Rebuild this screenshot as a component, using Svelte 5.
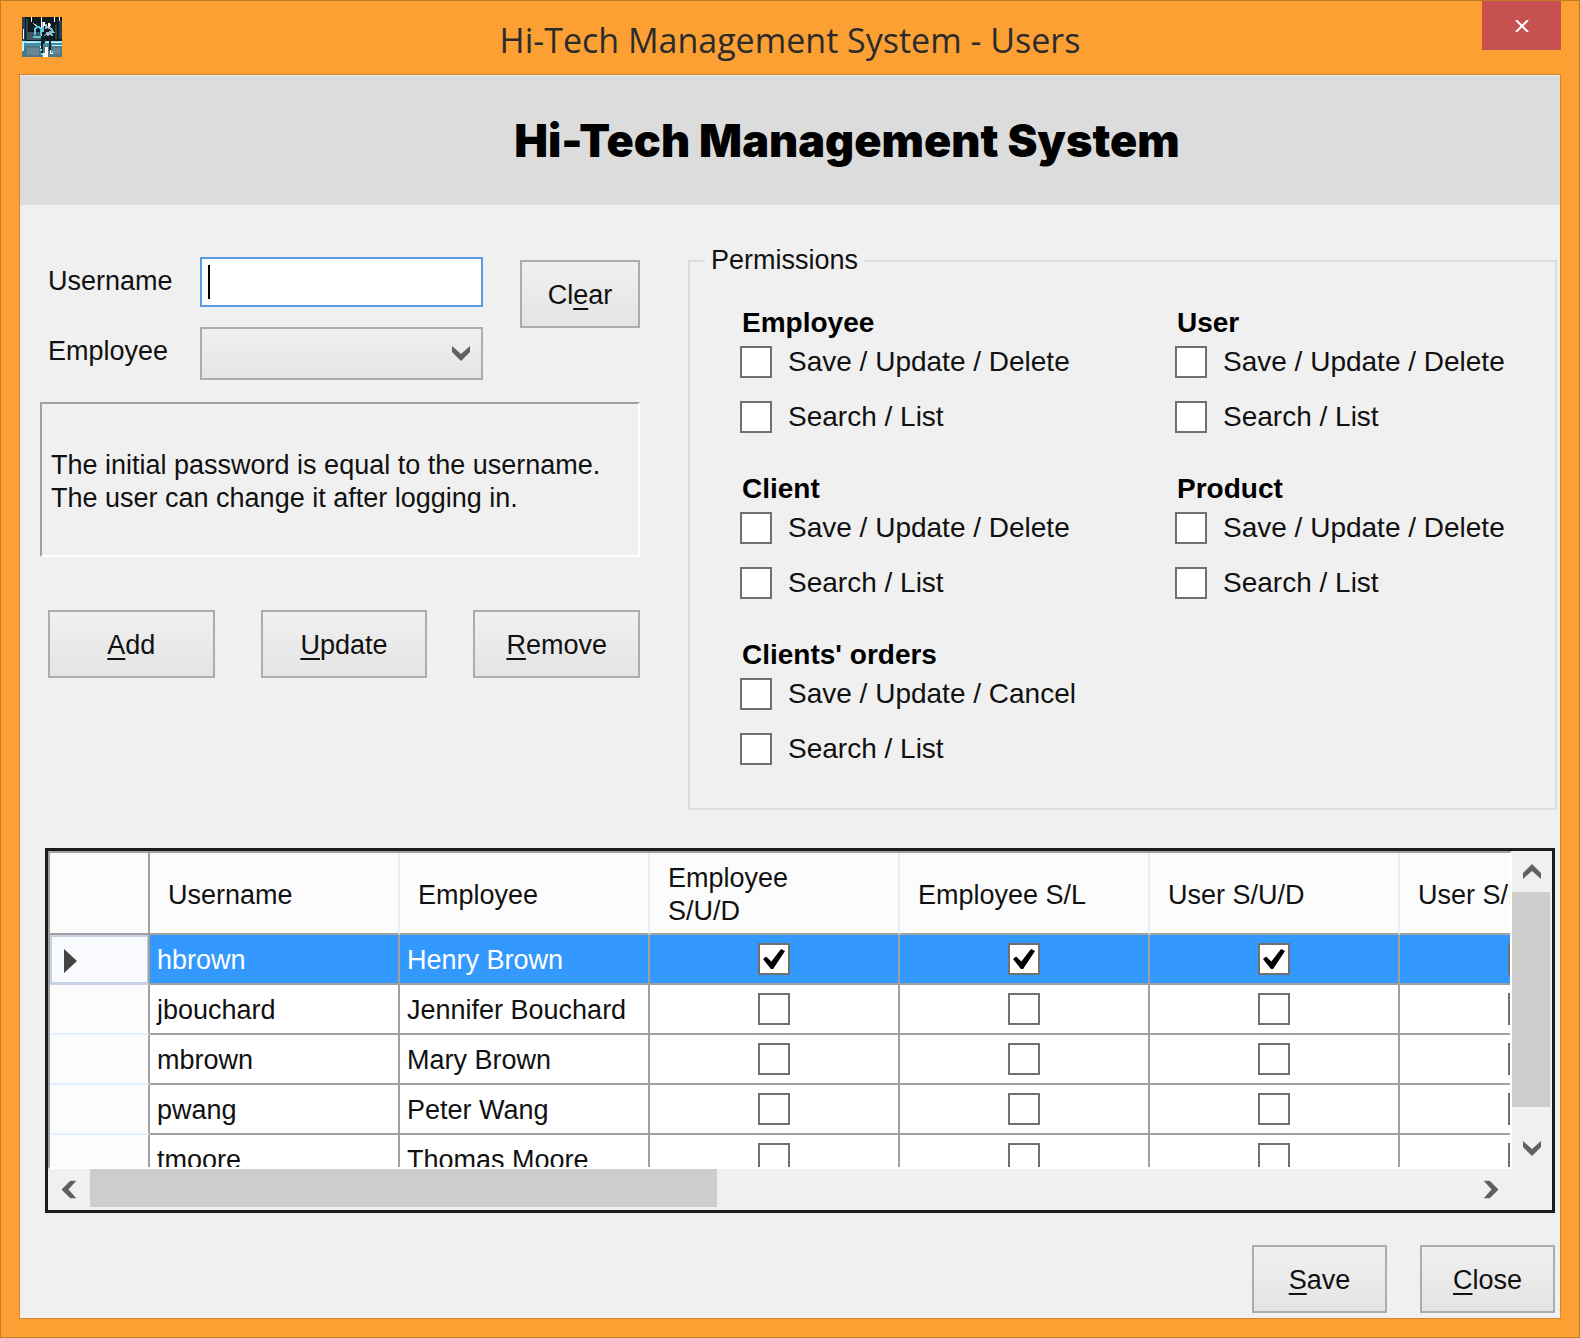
<script>
  const groups = [
    { id: 'employee', title: 'Employee', first: 'Save / Update / Delete' },
    { id: 'user', title: 'User', first: 'Save / Update / Delete' },
    { id: 'client', title: 'Client', first: 'Save / Update / Delete' },
    { id: 'product', title: 'Product', first: 'Save / Update / Delete' },
    { id: 'orders', title: "Clients' orders", first: 'Save / Update / Cancel' },
  ];

  const permissionColumns = ['Employee S/U/D', 'Employee S/L', 'User S/U/D', 'User S/L'];

  let rows = $state([
    { username: 'hbrown', employee: 'Henry Brown', flags: [true, true, true, true] },
    { username: 'jbouchard', employee: 'Jennifer Bouchard', flags: [false, false, false, false] },
    { username: 'mbrown', employee: 'Mary Brown', flags: [false, false, false, false] },
    { username: 'pwang', employee: 'Peter Wang', flags: [false, false, false, false] },
    { username: 'tmoore', employee: 'Thomas Moore', flags: [false, false, false, false] },
  ]);
  let selected = $state(0);
  let username = $state('');
</script>

{#snippet chevron(dir)}
  <svg class="chevron {dir}" viewBox="0 0 18 15" aria-hidden="true">
    <path d="M0 0 L9 8 L18 0 V6 L9 15 L0 6 Z" />
  </svg>
{/snippet}

<div class="window">
  <header class="titlebar">
    <svg class="app-icon" viewBox="0 0 40 40" aria-hidden="true">
      <rect width="40" height="40" fill="#101b20" />
      <path d="M0 0h3v24H0zM4 2h2v20H4zM33 8h2v14h-2zM37 4h3v18h-3z" fill="#28424d" />
      <rect x="5" y="15" width="14" height="8" fill="#40565f" />
      <rect y="24" width="40" height="16" fill="#4f7787" />
      <rect y="24" width="40" height="2" fill="#8fe2f0" />
      <rect y="26" width="40" height="3" fill="#3f8ea6" />
      <path d="M5 31h12v7H5zM31 31h7v6h-7z" fill="#668793" />
      <path d="M0 24h2v10H0zM24 25h14v1H24zM30 28h10v1H30zM4 25h9v1H4z" fill="#c4f4fa" />
      <path d="M1 12h1v10H1zM9 0h1v5H9zM19 0h1v19h-1zM32 0h1v5h-1zM37 0h1v4h-1z" fill="#fff" />
      <path d="M11 6l5 4" fill="none" stroke="#9adbe6" />
      <path d="M13 18q-1-8 3-8t3 8M11 20h8" fill="none" stroke="#53c8df" stroke-width="2" />
      <path d="M21 5v10M24 7v5M26 7l3 1M25 10l5 2M29 12l3 4M24 16l6-1M22 19l6-2 3 1" fill="none" stroke="#8fbecb" stroke-width="2" />
      <path d="M26 6h2v4h-2zM21 5h2v4h-2z" fill="#fff" />
      <path d="M20 22v14M28 21v13M24 18l-3 9" fill="none" stroke="#14252c" stroke-width="2" />
      <path d="M23 30h3v10h-5v-4h2zM28 33h1v3h2v1h-3zM18 29h1v2h-1z" fill="#fff" />
      <path d="M18 32h2v2h-2zM19 36h2v2h-2zM30 34h1v2h-1z" fill="#5fe6e0" />
    </svg>
    <div class="caption">Hi-Tech Management System - Users</div>
    <button class="win-close" aria-label="Close window">
      <svg viewBox="0 0 14 12" aria-hidden="true"><path d="M1 0 L13 12 M13 0 L1 12" /></svg>
    </button>
  </header>

  <main class="client">
    <div class="banner"><h1>Hi-Tech Management System</h1></div>

    <div class="body">
      <div class="top">
        <section class="editor">
          <div class="fields">
            <label for="username">Username</label>
            <input id="username" class="text" type="text" bind:value={username} />
            <label for="employee">Employee</label>
            <div class="combo">
              <select id="employee"><option></option></select>
              {@render chevron('down')}
            </div>
            <button class="btn clear">Cl<u>e</u>ar</button>
          </div>
          <p class="hint">The initial password is equal to the username.<br />The user can change it after logging in.</p>
          <div class="actions">
            <button class="btn"><u>A</u>dd</button>
            <button class="btn"><u>U</u>pdate</button>
            <button class="btn"><u>R</u>emove</button>
          </div>
        </section>

        <fieldset class="permissions">
          <legend>Permissions</legend>
          <div class="groups">
            {#each groups as g}
              <div class="group">
                <h2>{g.title}</h2>
                <label><input type="checkbox" name="{g.id}-edit" />{g.first}</label>
                <label><input type="checkbox" name="{g.id}-list" />Search / List</label>
              </div>
            {/each}
          </div>
        </fieldset>
      </div>

      <div class="grid">
        <div class="viewport">
          <table>
            <colgroup>
              <col class="c-head" /><col /><col /><col /><col /><col /><col />
            </colgroup>
            <thead>
              <tr>
                <th class="corner"></th>
                <th>Username</th>
                <th>Employee</th>
                {#each permissionColumns as c}<th>{c}</th>{/each}
              </tr>
            </thead>
            <tbody>
              {#each rows as row, i}
                <tr class:selected={selected === i} onclick={() => (selected = i)}>
                  <th class="row-head" scope="row" aria-label="Row {i + 1}">
                    {#if selected === i}<svg class="marker" viewBox="0 0 13 24" aria-hidden="true"><path d="M0 0 L13 12 L0 24 Z" /></svg>{/if}
                  </th>
                  <td>{row.username}</td>
                  <td>{row.employee}</td>
                  {#each row.flags as _, f}
                    <td class="flag"><input type="checkbox" aria-label="{permissionColumns[f]} for {row.username}" bind:checked={row.flags[f]} /></td>
                  {/each}
                </tr>
              {/each}
            </tbody>
          </table>
        </div>
        <div class="vscroll">
          <button aria-label="Scroll up">{@render chevron('up')}</button>
          <div class="track"><div class="thumb"></div></div>
          <button aria-label="Scroll down">{@render chevron('down')}</button>
        </div>
        <div class="hscroll">
          <button aria-label="Scroll left">{@render chevron('left')}</button>
          <div class="track"><div class="thumb"></div></div>
          <button aria-label="Scroll right">{@render chevron('right')}</button>
        </div>
      </div>

      <footer>
        <button class="btn"><u>S</u>ave</button>
        <button class="btn"><u>C</u>lose</button>
      </footer>
    </div>
  </main>
</div>

<style>
  :global(body) { margin: 0; background: #fca033; }
  .window, .window :global(*) { box-sizing: border-box; }
  .window {
    min-height: 100vh;
    display: flex;
    flex-direction: column;
    padding: 0 18px 18px;
    border: 1px solid #c17c24;
    background: #fca033;
    color: #111;
    font: 27px/33px "Liberation Sans", sans-serif;
  }
  button, input, select { font: inherit; color: inherit; border-radius: 0; margin: 0; }

  .titlebar { display: grid; grid-template-columns: 79px 1fr 79px; height: 73px; }
  .app-icon { width: 40px; height: 40px; margin: 16px 0 0 3px; shape-rendering: crispEdges; }
  .caption { padding-top: 14px; text-align: center; font: 34px/50px "Open Sans", sans-serif; color: #2b2b2b; }
  .win-close { height: 49px; padding: 0; border: 0; background: #c75050; display: grid; place-items: center; }
  .win-close svg { width: 14px; height: 12px; }
  .win-close path { stroke: #fff; stroke-width: 2; fill: none; }

  .client { flex: 1; display: flex; flex-direction: column; border: 1px solid #d08632; background: #f0f0f0; }
  .banner { height: 130px; padding-left: 114px; display: grid; place-items: center; background: #dcdcdc; border-top: 1px solid #ececec; }
  h1 { margin: 0; font: 900 45px/60px Inter, sans-serif; color: #000; }

  .body { padding: 39px 3px 5px 20px; display: flex; flex-direction: column; }
  .top { display: grid; grid-template-columns: 600px 1fr; column-gap: 48px; }
  .editor { padding-top: 13px; }
  .fields { display: grid; grid-template-columns: 152px 283px 120px; row-gap: 20px; padding-left: 8px; height: 123px; align-content: start; }
  .fields label { grid-column: 1; padding-top: 8px; }
  .fields .text {
    grid-column: 2; height: 50px; width: 100%; padding: 0 8px; border: 2px solid #569de5; outline: 0;
    background: linear-gradient(#000, #000) 6px center / 2px 34px no-repeat #fff; caret-color: transparent;
  }
  .combo { grid-column: 2; display: grid; align-items: center; }
  .combo > :global(*) { grid-area: 1 / 1; }
  .combo :global(.chevron) { justify-self: end; margin-right: 13px; pointer-events: none; }
  select { width: 100%; height: 53px; appearance: none; padding: 0 40px 0 8px; border: 2px solid #acacac; background: linear-gradient(#f0f0f0, #e5e5e5); outline: 0; }
  .btn { height: 68px; padding: 2px 0 0; border: 2px solid #acacac; background: linear-gradient(#f0f0f0, #e4e4e4); }
  u { text-decoration-thickness: 2px; text-underline-offset: 4px; text-decoration-skip-ink: none; }
  .clear { grid-column: 3; grid-row: 1 / 3; margin: 3px 0 0 37px; width: 120px; }
  .hint { height: 155px; margin: 22px 0 0; padding: 4px 9px 0; display: flex; align-items: center; border: 2px solid; border-color: #a0a0a0 #fff #fff #a0a0a0; }
  .actions { display: grid; grid-template-columns: repeat(3, 1fr); gap: 46px; padding: 53px 0 0 8px; }

  .permissions { min-width: 0; margin: 0; padding: 29px 0 43px 50px; border: 2px solid #dcdcdc; }
  legend { margin-left: -35px; padding: 0 6px; }
  .groups { display: grid; grid-template-columns: 435px 1fr; row-gap: 39px; font-size: 28px; }
  h2 { margin: 0 0 6px; padding-left: 2px; font-size: 28px; font-weight: 700; line-height: 33px; color: #000; }
  .group label { display: flex; align-items: center; gap: 16px; height: 33px; white-space: nowrap; }
  .group label + label { margin-top: 22px; }
  input[type='checkbox'] { appearance: none; flex: none; display: grid; place-items: center; width: 32px; height: 32px; border: 2px solid #707070; background: #fff; }
  input[type='checkbox']:checked::after {
    content: ''; width: 22px; height: 20px; background: #000;
    clip-path: polygon(0 50%, 14% 38%, 38% 62%, 82% 0, 100% 10%, 46% 100%, 36% 100%);
  }

  .grid {
    margin: 38px 2px 0 5px; display: grid; grid-template-columns: 1fr 40px; grid-template-rows: 318px 41px;
    border: 3px solid #1c1c1c; background: #f0f0f0;
  }
  .viewport { overflow: hidden; min-width: 0; background: #fff; border: 2px solid; border-color: #a0a0a0 #fff #fff #a0a0a0; }
  table { table-layout: fixed; width: 1600px; border-collapse: separate; border-spacing: 0; }
  col { width: 250px; }
  .c-head { width: 100px; }
  th { font-weight: 400; text-align: left; }
  thead th { height: 82px; padding: 4px 36px 0 18px; background: #fcfcfc; border-right: 2px solid #e6f0fa; border-bottom: 2px solid #a0a0a0; }
  thead .corner { border-right-color: #a0a0a0; }
  td, .row-head { height: 50px; padding: 3px 7px 0; white-space: nowrap; border-right: 2px solid #a0a0a0; border-bottom: 2px solid #a0a0a0; }
  .row-head { background: #fcfcfc; border-bottom-color: #e6f0fa; padding: 3px 14px 0; }
  .selected td { background: #3399ff; color: #fff; }
  .selected .row-head { background: #f8fafd; box-shadow: inset 2px 2px #c5d1e3, inset -1px -1px #c5d1e3; border-bottom-color: #c5d1e3; }
  td.flag { padding: 0; }
  .flag input { margin: 0 auto; }
  .marker { display: block; width: 13px; height: 24px; fill: #444; }

  .vscroll { display: grid; grid-template-rows: 41px 1fr 41px; }
  .hscroll { display: grid; grid-template-columns: 42px 1fr 42px; }
  .vscroll button, .hscroll button { padding: 0; border: 0; background: none; display: grid; place-items: center; }
  .track { min-width: 0; min-height: 0; }
  .thumb { background: #cdcdcd; }
  .vscroll .thumb { width: 38px; height: 91%; }
  .hscroll .thumb { height: 38px; width: calc(100% * 5 / 11); }
  .window :global(.chevron) { width: 18px; height: 15px; fill: #606060; display: block; }
  .window :global(.chevron.up) { transform: rotate(180deg); }
  .window :global(.chevron.left) { transform: rotate(90deg); }
  .window :global(.chevron.right) { transform: rotate(-90deg); }

  footer { display: flex; justify-content: flex-end; gap: 33px; padding: 32px 2px 0 0; }
  footer .btn { width: 135px; }
</style>
